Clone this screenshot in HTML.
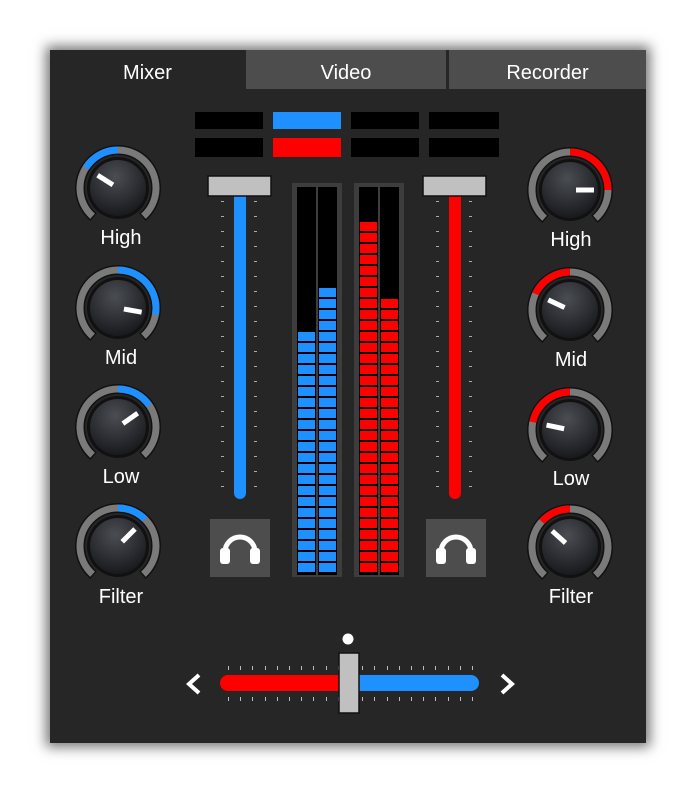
<!DOCTYPE html>
<html><head><meta charset="utf-8">
<style>
body{margin:0;width:696px;height:793px;background:#fff;overflow:hidden;font-family:"Liberation Sans",sans-serif;}
#p{position:absolute;left:50px;top:50px;width:596px;height:693px;background:#262626;box-shadow:0 0 12px 4px rgba(0,0,0,.55);}
.tab{position:absolute;top:0;height:39px;line-height:46px;text-align:center;color:#fff;font-size:20px;}
.lbl{position:absolute;width:100px;text-align:center;color:#fff;font-size:20px;}
svg{position:absolute;left:0;top:0}
</style></head><body>
<div id="p">
<div class="tab" style="left:0;width:195px;background:#262626">Mixer</div>
<div class="tab" style="left:196px;width:200px;background:#4d4d4d">Video</div>
<div class="tab" style="left:399px;width:197px;background:#4d4d4d">Recorder</div>
</div>
<svg id="s" width="696" height="793"></svg>
<div class="lbl" style="left:71px;top:227px">High</div>
<div class="lbl" style="left:71px;top:347px">Mid</div>
<div class="lbl" style="left:71px;top:466px">Low</div>
<div class="lbl" style="left:71px;top:586px">Filter</div>
<div class="lbl" style="left:521px;top:229px">High</div>
<div class="lbl" style="left:521px;top:349px">Mid</div>
<div class="lbl" style="left:521px;top:468px">Low</div>
<div class="lbl" style="left:521px;top:586px">Filter</div>
<script>
var h='';
function R(x,y,w,hh,c,ex){h+='<rect x="'+x+'" y="'+y+'" width="'+w+'" height="'+hh+'" fill="'+c+'" '+(ex||'')+'/>';}
[[195,'#000','#000'],[273,'#1e90ff','#f00'],[351,'#000','#000'],[429,'#000','#000']].forEach(function(d){R(d[0],112,d[0]==429?70:68,17,d[1]);R(d[0],138,d[0]==429?70:68,19,d[2]);});
function fader(hx,tx,col){
 for(var y=201;y<=495;y+=15){R(tx-13,y,3,1,'#aaa');R(tx+20,y,3,1,'#aaa');}
 h+='<line x1="'+(tx+6)+'" y1="196" x2="'+(tx+6)+'" y2="493" stroke="'+col+'" stroke-width="12" stroke-linecap="round"/>';
 R(hx,176,63,20,'#c0c0c0','stroke="#111" stroke-width="1.5"');
}
fader(208,234,'#1e90ff');fader(423,449,'#f00');
function meter(bx,col,t1,t2){
 R(bx,183,50,394,'#3d3d3d');
 [[bx+5,t1],[bx+26,t2]].forEach(function(b){R(b[0],187,19,388,'#000');
  for(var y=563;y>=b[1]-1;y-=11)R(b[0]+1,y,17,9,col);});
}
meter(292,'#1e90ff',333,289);meter(354,'#f00',223,300);
function hp(x){R(x,519,60,58,'#4d4d4d');var c=x+30;
 h+='<path d="M'+(c-15)+' 552 A15 15 0 0 1 '+(c+15)+' 552" fill="none" stroke="#fff" stroke-width="5"/>';
 h+='<rect x="'+(c-20)+'" y="548" width="10" height="16" rx="3" fill="#fff"/><rect x="'+(c+10)+'" y="548" width="10" height="16" rx="3" fill="#fff"/>';}
hp(210);hp(426);
function P(cx,cy,r,a){a=a*Math.PI/180;return [cx+r*Math.sin(a),cy-r*Math.cos(a)];}
function arc(cx,cy,r,a1,a2,col,w){var p=P(cx,cy,r,a1),q=P(cx,cy,r,a2);var lg=(a2-a1)>180?1:0;
 return '<path d="M'+p[0]+' '+p[1]+' A'+r+' '+r+' 0 '+lg+' 1 '+q[0]+' '+q[1]+'" fill="none" stroke="'+col+'" stroke-width="'+(w||7)+'"/>';}
function knob(cx,cy,v,col){
 h+=arc(cx,cy,38,-140,140,'#111',10);
 h+=arc(cx,cy,38,-138,138,'#7a7a7a');
 var a=Math.min(v,0),b=Math.max(v,0);if(b-a>0.5)h+=arc(cx,cy,38,a,b,col);
 h+='<circle cx="'+cx+'" cy="'+cy+'" r="31" fill="#111"/><circle cx="'+cx+'" cy="'+cy+'" r="28" fill="url(#g)"/>';
 var p=P(cx,cy,6,v),q=P(cx,cy,24,v);
 h+='<line x1="'+p[0]+'" y1="'+p[1]+'" x2="'+q[0]+'" y2="'+q[1]+'" stroke="#fff" stroke-width="5"/>';}
h='<defs><radialGradient id="g" cx="45%" cy="30%" r="75%"><stop offset="0" stop-color="#4a4d52"/><stop offset="1" stop-color="#15161a"/></radialGradient></defs>'+h;
knob(118,188,-58,'#1e90ff');knob(118,308,100,'#1e90ff');knob(118,427,55,'#1e90ff');knob(118,546,45,'#1e90ff');
knob(570,190,90,'#f00');knob(570,310,-65,'#f00');knob(570,430,-78,'#f00');knob(570,547,-48,'#f00');
for(var x=228;x<=472;x+=12.2){R(Math.round(x),666,1,4,'#bbb');R(Math.round(x),697,1,4,'#bbb');}
h+='<line x1="228" y1="683" x2="345" y2="683" stroke="#f00" stroke-width="16" stroke-linecap="round"/>';
h+='<line x1="352" y1="683" x2="471" y2="683" stroke="#1e90ff" stroke-width="16" stroke-linecap="round"/>';
R(339,653,20,60,'#c0c0c0','stroke="#111" stroke-width="1.5"');
h+='<circle cx="348" cy="639" r="5.5" fill="#fff"/>';
h+='<path d="M199 675 L189 684 L199 693" fill="none" stroke="#fff" stroke-width="4"/>';
h+='<path d="M502 675 L512 684 L502 693" fill="none" stroke="#fff" stroke-width="4"/>';
document.getElementById('s').innerHTML=h;
</script>
</body></html>
